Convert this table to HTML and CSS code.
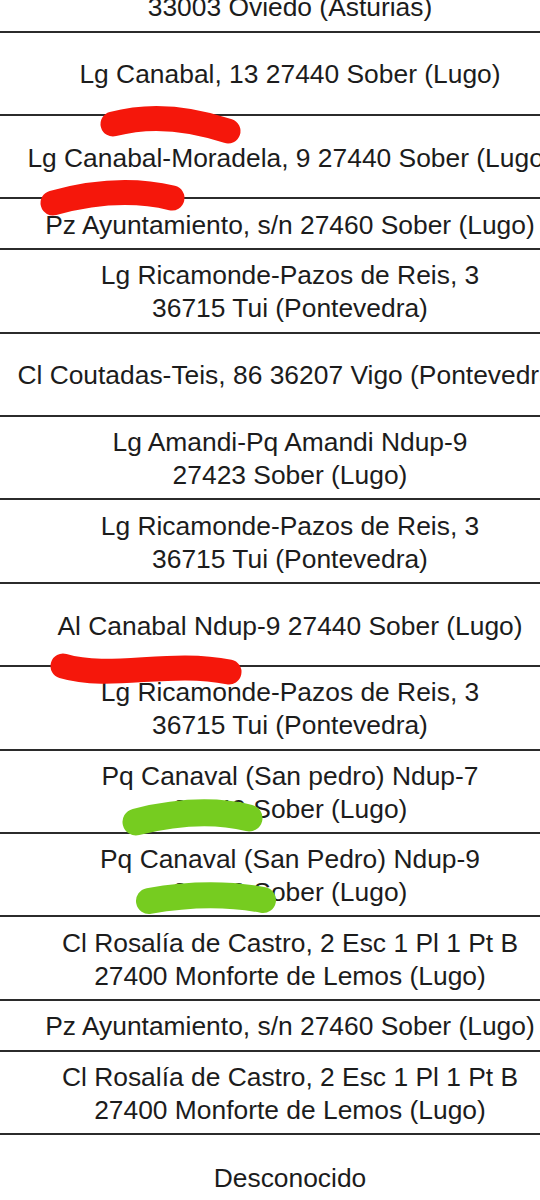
FILE: index.html
```html
<!DOCTYPE html>
<html>
<head>
<meta charset="utf-8">
<meta name="viewport" content="width=device-width, initial-scale=1">
<title>Direcciones</title>
<link rel="stylesheet" href="styles.css">
</head>
<body>
<main class="list">
  <div class="row cut"><span>33003 Oviedo (Asturias)</span></div>
  <div class="row"><span>Lg Canabal, 13 27440 Sober (Lugo)</span></div>
  <div class="row"><span>Lg Canabal-Moradela, 9 27440 Sober (Lugo)</span></div>
  <div class="row short"><span>Pz Ayuntamiento, s/n 27460 Sober (Lugo)</span></div>
  <div class="row"><span>Lg Ricamonde-Pazos de Reis, 3<br>36715 Tui (Pontevedra)</span></div>
  <div class="row"><span>Cl Coutadas-Teis, 86 36207 Vigo (Pontevedra)</span></div>
  <div class="row"><span>Lg Amandi-Pq Amandi Ndup-9<br>27423 Sober (Lugo)</span></div>
  <div class="row"><span>Lg Ricamonde-Pazos de Reis, 3<br>36715 Tui (Pontevedra)</span></div>
  <div class="row"><span>Al Canabal Ndup-9 27440 Sober (Lugo)</span></div>
  <div class="row"><span>Lg Ricamonde-Pazos de Reis, 3<br>36715 Tui (Pontevedra)</span></div>
  <div class="row"><span>Pq Canaval (San pedro) Ndup-7<br>27440 Sober (Lugo)</span></div>
  <div class="row"><span>Pq Canaval (San Pedro) Ndup-9<br>27440 Sober (Lugo)</span></div>
  <div class="row"><span>Cl Rosalía de Castro, 2 Esc 1 Pl 1 Pt B<br>27400 Monforte de Lemos (Lugo)</span></div>
  <div class="row short"><span>Pz Ayuntamiento, s/n 27460 Sober (Lugo)</span></div>
  <div class="row"><span>Cl Rosalía de Castro, 2 Esc 1 Pl 1 Pt B<br>27400 Monforte de Lemos (Lugo)</span></div>
  <div class="row last"><span>Desconocido</span></div>

  <!-- marker scribbles drawn over the screenshot -->
  <svg class="marks" width="580" height="1200" viewBox="0 0 580 1200">
    <g fill="none" stroke-linecap="round">
      <path class="red" d="M113 124 Q165 110 228 131" stroke-width="25"/>
      <path class="red" d="M53 203 Q118 185 172 198" stroke-width="25"/>
      <path class="red" d="M63 666 C110 680 170 660 229 672" stroke-width="25"/>
      <path class="green" d="M136 822 Q200 806 249 818" stroke-width="27"/>
      <path class="green" d="M149 901 Q210 890 263 900" stroke-width="26"/>
    </g>
  </svg>
</main>
</body>
</html>
```

FILE: styles.css
```css
* {box-sizing: border-box}

body {
 margin: 0;
 background: #fff;
 overflow: hidden;
}

.list {
 position: relative;
 width: 580px;
 font-family: "Liberation Sans", Arial, sans-serif;
 font-size: 26.4px;
 line-height: 33px;
 color: #1c1c1c;
}

.row {
 height: 83.4px;
 display: flex;
 align-items: center;
 justify-content: center;
 text-align: center;
 white-space: nowrap;
 padding-top: 3px;
 border-bottom: 2px solid #2b2b2b;
}

.row.short {
 height: 50.8px;
}

.row.cut {
 height: 32.7px;
 align-items: flex-end;
 padding-bottom: 7px;
}

.row.last {
 border-bottom: none;
}

.marks {
 position: absolute;
 top: 0;
 left: 0;
 pointer-events: none;
}

.red {
 stroke: #f5170b;
}

.green {
 stroke: #76cc20;
}
```
